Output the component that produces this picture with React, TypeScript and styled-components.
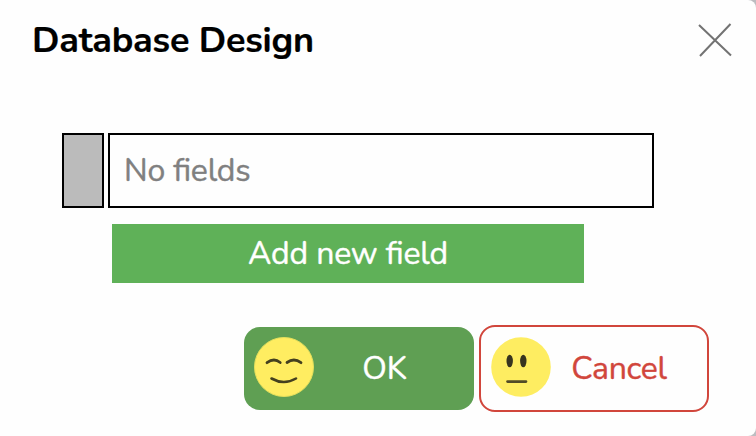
import React from "react";
import styled, { createGlobalStyle } from "styled-components";

const GlobalStyle = createGlobalStyle`
  *, *::before, *::after { box-sizing: border-box; }
  body {
    margin: 0;
    background: #bdbdc1;
    font-family: Nunito, Lato, "Open Sans", sans-serif;
    font-size: 32px;
    line-height: 40px;
    overflow: hidden;
  }
`;

const Dialog = styled.section`
  width: 756px;
  height: 436px;
  display: flex;
  flex-direction: column;
  background: #fefefe;
  border-radius: 0 8px 8px 0;
`;

const Header = styled.header`
  display: flex;
  justify-content: space-between;
  height: 133px;
  padding: 20px 24px 0 32px;
`;

const Title = styled.h1`
  margin: 1px 0 0;
  font-size: 36px;
  line-height: 40px;
  font-weight: 700;
  letter-spacing: -0.23px;
  -webkit-text-stroke: 0.2px currentColor;
  color: #000;
`;

const CloseButton = styled.button`
  width: 34px;
  height: 34px;
  margin-top: 3px;
  padding: 0;
  border: 0;
  background: none;
  svg { display: block; }
`;

const FieldRow = styled.div`
  display: flex;
  gap: 4px;
  height: 75px;
  margin-left: 62px;
`;

const Handle = styled.div`
  width: 42px;
  border: 2px solid #000;
  background: #bbb;
`;

const FieldBox = styled.div`
  display: flex;
  align-items: center;
  width: 546px;
  padding-left: 14px;
  border: 2px solid #000;
  color: #808080;
`;

const Label = styled.span<{ $spacing?: number }>`
  letter-spacing: ${(p) => p.$spacing ?? 0}px;
  font-feature-settings: "liga" 1;
  -webkit-text-stroke: 0.4px currentColor;
  white-space: nowrap;
`;

const AddButton = styled.button`
  width: 472px;
  height: 59px;
  margin: 16px 0 0 112px;
  padding: 0;
  border: 0;
  background: #5fb158;
  color: #fff;
  font: inherit;
`;

const Footer = styled.footer`
  display: flex;
  align-items: center;
  gap: 5px;
  margin: 42px 0 0 244px;
`;

const ActionButton = styled.button<{ $outlined?: boolean }>`
  display: flex;
  align-items: center;
  width: 230px;
  height: ${(p) => (p.$outlined ? 87 : 83)}px;
  padding: 0 ${(p) => (p.$outlined ? 20 : 20)}px 0 ${(p) => (p.$outlined ? 10 : 9)}px;
  border: ${(p) => (p.$outlined ? "2px solid #d1463c" : "0")};
  border-radius: 16px;
  background: ${(p) => (p.$outlined ? "transparent" : "#5f9f53")};
  color: ${(p) => (p.$outlined ? "#d1463c" : "#fff")};
  font: inherit;
  svg { flex: none; margin-bottom: 3px; }
`;

const ActionText = styled.span`
  flex: 1;
  display: flex;
  justify-content: center;
`;

const Smile = () => (
  <svg width="62" height="62" viewBox="0 0 62 62" fill="none">
    <circle cx="31" cy="31" r="29.5" fill="#ffed61" stroke="#e3df5c" />
    <g stroke="#44401f" strokeLinecap="round">
      <path d="M14 26.7Q21 21.5 27.2 26.5M34 26.5Q41 21.5 48 26.7" strokeWidth="2.8" />
      <path d="M18.5 42.5Q31 49.5 43 42.5" strokeWidth="2.6" />
    </g>
  </svg>
);

const Neutral = () => (
  <svg width="60" height="60" viewBox="0 0 60 60">
    <circle cx="30" cy="30" r="29.8" fill="#feed61" />
    <g fill="#37341f">
      <ellipse cx="18.7" cy="24" rx="3.2" ry="6.3" />
      <ellipse cx="32.3" cy="24" rx="3.2" ry="6.3" />
    </g>
    <path d="M16.5 44.6H35" stroke="#514b27" strokeWidth="2.6" strokeLinecap="round" />
  </svg>
);

export default function App() {
  return (
    <>
      <GlobalStyle />
      <Dialog>
        <Header>
          <Title>Database Design</Title>
          <CloseButton aria-label="Close">
            <svg width="34" height="34" viewBox="0 0 34 34" stroke="#737373" strokeWidth="2">
              <path d="M1 2L33 32.5M32.5 1L2 33" />
            </svg>
          </CloseButton>
        </Header>
        <FieldRow>
          <Handle />
          <FieldBox><Label $spacing={-0.2}>No fields</Label></FieldBox>
        </FieldRow>
        <AddButton><Label $spacing={-0.15}>Add new field</Label></AddButton>
        <Footer>
          <ActionButton><Smile /><ActionText><Label>OK</Label></ActionText></ActionButton>
          <ActionButton $outlined><Neutral /><ActionText><Label $spacing={-0.3}>Cancel</Label></ActionText></ActionButton>
        </Footer>
      </Dialog>
    </>
  );
}
